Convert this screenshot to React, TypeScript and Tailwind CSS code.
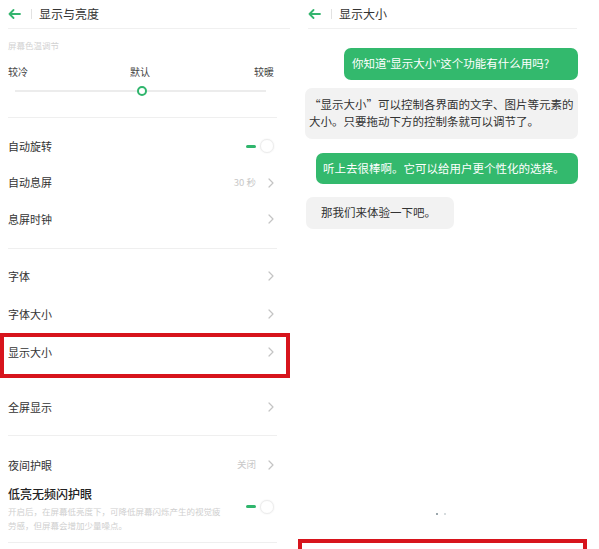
import { ReactNode } from 'react';

const FONT = { fontFamily: '"Noto Sans CJK SC", "Noto Sans", sans-serif' };

function BackArrow() {
  return (
    <svg width="13" height="10" viewBox="0 0 13 10" fill="none" stroke="#34b56e" strokeWidth="1.8" strokeLinecap="round" strokeLinejoin="round">
      <path d="M12 5H1.5M5.5 1L1.5 5l4 4" />
    </svg>
  );
}

function Chevron() {
  return (
    <svg width="6" height="10" viewBox="0 0 6 10" fill="none" stroke="#c4c4c4" strokeWidth="1.2" strokeLinecap="round" strokeLinejoin="round">
      <path d="M1 1l4 4-4 4" />
    </svg>
  );
}

function Toggle() {
  return (
    <div className="flex items-center w-[30px] h-[15px]">
      <span className="w-[10px] h-[3px] rounded-full bg-[#2fb56c]" />
      <span className="ml-[4px] w-[14px] h-[14px] rounded-full bg-white border border-[#ededed] shadow-[0_0_2px_rgba(0,0,0,0.08)]" />
    </div>
  );
}

function Header({ title, lineClass }: { title: string; lineClass: string }) {
  return (
    <div className={`h-[29px] flex items-center border-b border-[#f0f0f0] ${lineClass}`}>
      <div className="flex items-center">
        <BackArrow />
        <span className="ml-[10px] w-px h-[10px] bg-[#e2e2e2]" />
        <span className="ml-[7px] text-[12px] text-[#333] leading-none">{title}</span>
      </div>
    </div>
  );
}

function Row({
  label,
  h,
  right,
}: {
  label: string;
  h: string;
  right?: ReactNode;
}) {
  return (
    <div className={`flex items-center justify-between pl-[8px] pr-[22px] ${h}`}>
      <span className="text-[11px] text-[#333] leading-none">{label}</span>
      {right}
    </div>
  );
}

function Value({ text }: { text: string }) {
  return (
    <div className="flex items-center gap-[12px]">
      <span className="text-[9.5px] text-[#c8c8c8] leading-none">{text}</span>
      <Chevron />
    </div>
  );
}

function Divider({ w }: { w: string }) {
  return <div className={`ml-[8px] h-px bg-[#efefef] ${w}`} />;
}

// narrow western quotes, as in the green bubble
function Q({ c }: { c: string }) {
  return <span style={{ fontFamily: '"Liberation Sans", sans-serif' }}>{c}</span>;
}

function LeftPanel() {
  return (
    <div className="relative w-[298px] h-full bg-white">
      <div className="pl-[10px] pr-[6px]">
        <Header title="显示与亮度" lineClass="-ml-[2px]" />
      </div>

      <div className="h-[32px] flex items-center pl-[8px]">
        <span className="text-[8.5px] text-[#d2d2d2] leading-none">屏幕色温调节</span>
      </div>
      <div className="h-[22px] flex items-center justify-between pl-[8px] pr-[22px] text-[10px] text-[#444] leading-none">
        <span>较冷</span>
        <span className="-ml-[2px]">默认</span>
        <span>较暖</span>
      </div>
      <div className="h-[16px] flex items-center pl-[15px] pr-[30px]">
        <div className="relative flex-1 h-[2px] bg-[#ececec]">
          <span className="absolute left-[122px] -top-[4px] w-[10px] h-[10px] rounded-full bg-white border-2 border-[#2fb56c]" />
        </div>
      </div>
      <div className="h-[18px]" />
      <Divider w="w-[269px]" />

      <div className="h-[10px]" />
      <Row label="自动旋转" h="h-[36px]" right={<div className="-mr-[2px]"><Toggle /></div>} />
      <Row label="自动息屏" h="h-[37px]" right={<Value text="30 秒" />} />
      <Row label="息屏时钟" h="h-[36px]" right={<Chevron />} />
      <div className="h-[11px]" />
      <Divider w="w-[269px]" />

      <div className="h-[8px]" />
      <Row label="字体" h="h-[38px]" right={<Chevron />} />
      <Row label="字体大小" h="h-[38px]" right={<Chevron />} />
      <Row label="显示大小" h="h-[38px]" right={<Chevron />} />
      <div className="h-[17px]" />
      <Row label="全屏显示" h="h-[38px]" right={<Chevron />} />
      <div className="h-[9px]" />
      <Divider w="w-[269px]" />

      <div className="h-[10px]" />
      <Row label="夜间护眼" h="h-[38px]" right={<Value text="关闭" />} />
      <div className="flex items-start justify-between pl-[8px] pr-[20px] pt-[2px]">
        <div>
          <div className="text-[12px] font-medium text-[#222] leading-[16px]">低亮无频闪护眼</div>
          <div className="mt-[2px] text-[8.5px] text-[#cfcfcf] leading-[14px]">
            开启后，在屏幕低亮度下，可降低屏幕闪烁产生的视觉疲
            <br />
            劳感，但屏幕会增加少量噪点。
          </div>
        </div>
        <div className="mt-[13px]">
          <Toggle />
        </div>
      </div>
      <div className="h-[10px]" />
      <Divider w="w-[269px]" />

      <div className="absolute left-0 top-[333px] w-[290px] h-[45px] border-[4px] border-[#d7141c]" />
    </div>
  );
}

function Bubble({ children, tone, className }: { children: ReactNode; tone: 'green' | 'gray'; className: string }) {
  const color = tone === 'green' ? 'bg-[#33b96d] text-white' : 'bg-[#f2f2f2] text-[#333]';
  return <div className={`rounded-[7px] text-[11.5px] ${color} ${className}`}>{children}</div>;
}

function RightPanel() {
  return (
    <div className="relative flex-1 h-full bg-white flex flex-col">
      <div className="pl-[13px] pr-[22px]">
        <Header title="显示大小" lineClass="-ml-[3px]" />
      </div>

      <div className="flex flex-col pl-[7px] pr-[21px]">
        <div className="h-[19px]" />
        <Bubble tone="green" className="self-end w-[234px] h-[32px] flex items-center pl-[8px] leading-none">
          <span>
            你知道<Q c="“" />显示大小<Q c="”" />这个功能有什么用吗?
          </span>
        </Bubble>
        <div className="h-[8px]" />
        <Bubble tone="gray" className="w-[273px] h-[51px] pl-[4px] pt-[8px] leading-[17px]">
          “显示大小”可以控制各界面的文字、图片等元素的大小。只要拖动下方的控制条就可以调节了。
        </Bubble>
        <div className="h-[14px]" />
        <Bubble tone="green" className="self-end w-[262px] h-[31px] flex items-center pl-[7px] leading-none">
          听上去很棒啊。它可以给用户更个性化的选择。
        </Bubble>
        <div className="h-[13px]" />
        <Bubble tone="gray" className="ml-[1px] w-[148px] h-[32px] flex items-center pl-[15px] leading-none">
          那我们来体验一下吧。
        </Bubble>
      </div>

      <div className="mt-auto mb-[34px] flex justify-center gap-[6px] pr-[16px]">
        <span className="w-[2px] h-[2px] rounded-full bg-[#7a8a90]" />
        <span className="w-[2px] h-[2px] rounded-full bg-[#c9d0d3]" />
      </div>

      <div className="absolute left-0 top-[539px] w-[289px] h-[30px] border-[4px] border-[#d7141c]" />
    </div>
  );
}

export default function App() {
  return (
    <div className="w-[599px] h-[549px] overflow-hidden bg-white flex" style={FONT}>
      <LeftPanel />
      <div className="w-[2px] bg-white" />
      <RightPanel />
    </div>
  );
}
